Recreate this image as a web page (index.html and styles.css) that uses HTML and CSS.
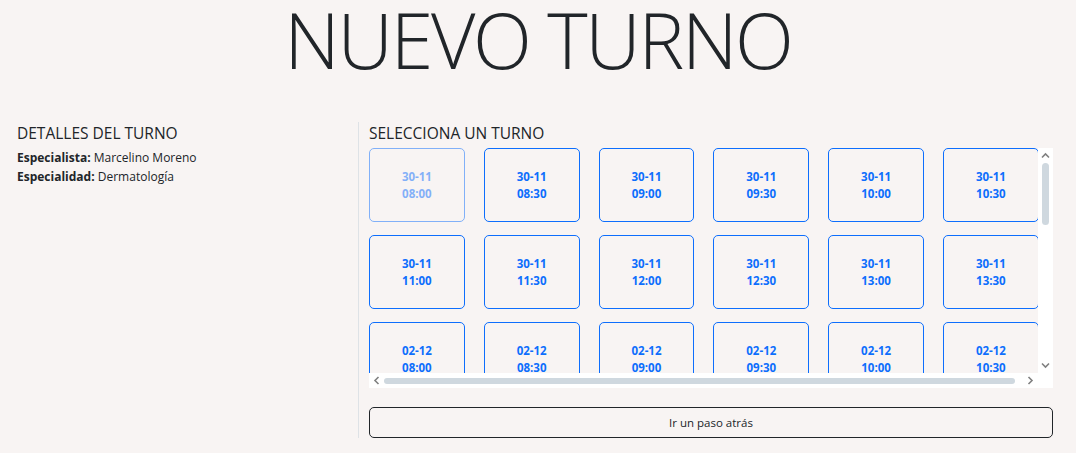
FILE: index.html
```html
<!DOCTYPE html>
<html lang="es">
<head>
<meta charset="utf-8">
<title>Nuevo turno</title>
<link rel="stylesheet" href="styles.css">
</head>
<body>
<header class="title-bar">
  <h1 class="title">NUEVO TURNO</h1>
</header>
<main class="layout">
  <section class="details">
    <h2 class="section-title">DETALLES DEL TURNO</h2>
    <p class="detail"><strong>Especialista:</strong> Marcelino Moreno</p>
    <p class="detail"><strong>Especialidad:</strong> Dermatología</p>
  </section>
  <section class="picker">
    <h2 class="section-title">SELECCIONA UN TURNO</h2>
    <div class="slots-frame">
      <div class="slots-viewport">
        <div class="slots">
          <button class="slot" disabled><span>30-11</span><span>08:00</span></button>
          <button class="slot"><span>30-11</span><span>08:30</span></button>
          <button class="slot"><span>30-11</span><span>09:00</span></button>
          <button class="slot"><span>30-11</span><span>09:30</span></button>
          <button class="slot"><span>30-11</span><span>10:00</span></button>
          <button class="slot"><span>30-11</span><span>10:30</span></button>
          <button class="slot"><span>30-11</span><span>11:00</span></button>
          <button class="slot"><span>30-11</span><span>11:30</span></button>
          <button class="slot"><span>30-11</span><span>12:00</span></button>
          <button class="slot"><span>30-11</span><span>12:30</span></button>
          <button class="slot"><span>30-11</span><span>13:00</span></button>
          <button class="slot"><span>30-11</span><span>13:30</span></button>
          <button class="slot"><span>02-12</span><span>08:00</span></button>
          <button class="slot"><span>02-12</span><span>08:30</span></button>
          <button class="slot"><span>02-12</span><span>09:00</span></button>
          <button class="slot"><span>02-12</span><span>09:30</span></button>
          <button class="slot"><span>02-12</span><span>10:00</span></button>
          <button class="slot"><span>02-12</span><span>10:30</span></button>
        </div>
      </div>
      <div class="vbar">
        <svg class="arrow" viewBox="0 0 15 15" width="15" height="15"><path d="M4 9.5 L7.5 6 L11 9.5" /></svg>
        <div class="vtrack"><div class="vthumb"></div></div>
        <svg class="arrow" viewBox="0 0 15 15" width="15" height="15"><path d="M4 5.5 L7.5 9 L11 5.5" /></svg>
      </div>
      <div class="hbar">
        <svg class="arrow" viewBox="0 0 15 15" width="15" height="15"><path d="M9.5 4 L6 7.5 L9.5 11" /></svg>
        <div class="htrack"><div class="hthumb"></div></div>
        <svg class="arrow" viewBox="0 0 15 15" width="15" height="15"><path d="M5.5 4 L9 7.5 L5.5 11" /></svg>
      </div>
      <div class="corner"></div>
    </div>
    <button class="back-btn">Ir un paso atrás</button>
  </section>
</main>
</body>
</html>
```

FILE: styles.css
```css
* { box-sizing: border-box; }

html, body {
  margin: 0;
  background: #f8f4f3;
  color: #212529;
  font-family: "Open Sans", "Noto Sans", sans-serif;
}

.title-bar {
  padding: 0;
}

.title {
  margin: 0;
  font-size: 77px;
  line-height: 80px;
  font-weight: 300;
  letter-spacing: -2.3px;
  text-align: center;
  color: #212529;
}

.layout {
  display: grid;
  grid-template-columns: 353px 707px;
  margin: 42px 5px 0;
}

.details {
  padding: 0 12px;
}

.picker {
  border-left: 1px solid #dee2e6;
  padding: 0 12px 0 10px;
}

.section-title {
  margin: 1px 0 5px;
  font-size: 15.5px;
  line-height: 20px;
  font-weight: 500;
  color: #212529;
}

.detail {
  margin: 0;
  font-size: 12px;
  line-height: 19px;
}

.detail strong {
  font-weight: 700;
}

.slots-frame {
  display: grid;
  grid-template-columns: 669px 15px;
  grid-template-rows: 225px 15px;
}

.slots-viewport {
  overflow: hidden;
}

.slots {
  display: grid;
  grid-template-columns: repeat(6, 95.8px);
  gap: 13px 19px;
  width: max-content;
}

.slot {
  height: 74px;
  border: 1px solid #0d6efd;
  border-radius: 5px;
  background: transparent;
  color: #0d6efd;
  font-family: "Open Sans", "Noto Sans", sans-serif;
  font-size: 11.5px;
  font-weight: 700;
  line-height: 17px;
  display: flex;
  flex-direction: column;
  align-items: center;
  justify-content: center;
  padding: 0;
}

.slot:disabled {
  opacity: 0.5;
}

.vbar, .hbar, .corner {
  background: #ffffff;
}

.vbar {
  display: flex;
  flex-direction: column;
}

.hbar {
  display: flex;
}

.arrow {
  flex: none;
  display: block;
}

.arrow path {
  fill: none;
  stroke: #808080;
  stroke-width: 1.6;
}

.vtrack {
  flex: 1;
  display: flex;
  justify-content: center;
}

.vthumb {
  width: 7px;
  height: 62px;
  border-radius: 4px;
  background: #cfd8df;
}

.htrack {
  flex: 1;
  display: flex;
  align-items: center;
}

.hthumb {
  width: 631px;
  height: 6px;
  border-radius: 3px;
  background: #cfd8df;
}

.back-btn {
  display: block;
  width: 100%;
  height: 31px;
  margin-top: 19px;
  border: 1px solid #212529;
  border-radius: 5px;
  background: transparent;
  color: #212529;
  font-family: "Open Sans", "Noto Sans", sans-serif;
  font-size: 11.5px;
}
```
